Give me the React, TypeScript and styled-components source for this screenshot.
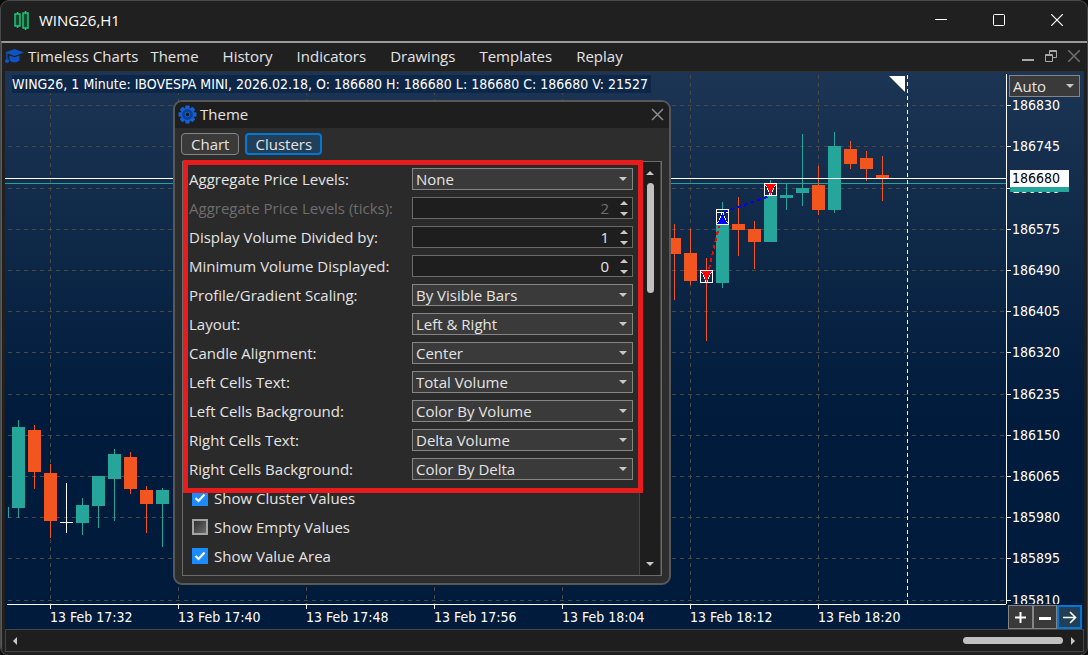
import React from "react";
import styled, { createGlobalStyle, css } from "styled-components";

const ui = `"Open Sans", "Noto Sans", sans-serif`;
const chartFont = `"DejaVu Sans Condensed", "DejaVu Sans", sans-serif`;

const GlobalStyle = createGlobalStyle`
  *, *::before, *::after { box-sizing: border-box; }
  body { margin: 0; background: #0c0c0c; font: 15px/20px ${ui}; color: #e4e4e4; }
  button, select, input { font: inherit; color: inherit; margin: 0; }
`;

const Window = styled.div`
  min-height: 100vh;
  display: flex;
  flex-direction: column;
  background: #202020;
  border: 1px solid #4a4a4a;
  border-radius: 9px;
  overflow: hidden;
`;

const TitleBar = styled.header`
  height: 40px;
  display: flex;
  align-items: center;
  padding: 0 24px 2px 13px;
  gap: 10px;
`;

const WindowTitle = styled.h1`
  flex: 1;
  margin: 0;
  font-size: 15px;
  font-weight: 400;
  color: #ffffff;
`;

const Controls = styled.div<{ $gap: number }>`
  display: flex;
  align-items: center;
  gap: ${(p) => p.$gap}px;
`;

const IconButton = styled.button<{ $color?: string }>`
  display: flex;
  padding: 0;
  border: 0;
  background: none;
  color: ${(p) => p.$color ?? "#ffffff"};
`;

const Frame = styled.div`
  flex: 1;
  display: flex;
  flex-direction: column;
  border-top: 2px solid #9a9a9a;
  border-left: 1px solid #5a5a5a;
  padding: 0 3px 3px;
`;

const MenuBar = styled.nav`
  height: 28px;
  display: flex;
  align-items: center;
  padding: 0 4px 2px 0;
`;

const MenuList = styled.ul`
  flex: 1;
  display: flex;
  gap: 24px;
  margin: 0 0 0 4px;
  padding: 0;
  list-style: none;
`;

const MenuItem = styled.button`
  padding: 0;
  border: 0;
  background: none;
`;

const Brand = styled.li`
  margin-right: -12px;
`;

const Workspace = styled.main`
  position: relative;
  flex: 1;
  display: grid;
  grid-template-columns: minmax(0, 1fr) 78px;
  grid-template-rows: minmax(0, 1fr) 25px;
  min-height: 558px;
  background: linear-gradient(#1c3554 0%, #011b3c 62%, #011b3c 100%);
  border-top: 1px solid #303030;
`;

const Plot = styled.div`
  position: relative;
  min-width: 0;
`;

const Drawing = styled.svg`
  display: block;
  width: 100%;
  height: 100%;
  min-height: 100%;
  font-family: ${chartFont};
  font-size: 14px;
  fill: #ffffff;
`;

const Layer = styled.div`
  position: absolute;
  inset: 0;
  overflow: hidden;
`;

const Quote = styled.p`
  position: absolute;
  left: 7px;
  top: 3px;
  margin: 0;
  padding-right: 3px;
  white-space: nowrap;
  background: #0d2749;
  color: #ffffff;
  font: 14px/18px ${chartFont};
`;

const PriceAxis = styled.div`
  position: relative;
`;

const ScaleSelect = styled.div`
  position: absolute;
  left: 3px;
  top: 3px;
  width: 71px;
`;

const AxisButtons = styled.div`
  display: grid;
  grid-template-columns: repeat(3, 1fr);
  padding: 1px 2px 0 2px;
`;

const AxisButton = styled.button<{ $active?: boolean }>`
  display: flex;
  align-items: center;
  justify-content: center;
  padding: 0;
  color: #ffffff;
  border: 1px solid #858585;
  background: #3a3a3a;
  ${(p) => p.$active && css`border: 2px solid #0078d7; background: #233f58;`}
`;

const HScroll = styled.div`
  height: 23px;
  display: flex;
  align-items: center;
  border: 1px solid #454545;
  background: #1e1e1e;
  padding: 0 8px 0 7px;
  gap: 8px;
`;

const HTrack = styled.div`
  flex: 1;
  display: flex;
  justify-content: flex-end;
`;

const HThumb = styled.div`
  width: 100px;
  height: 7px;
  border-radius: 4px;
  background: #c0c0c0;
`;

const Dialog = styled.section`
  position: absolute;
  left: 168px;
  top: 28px;
  width: 498px;
  display: flex;
  flex-direction: column;
  padding: 0 2px 7px;
  background: #2d2d2d;
  border: 2px solid #585858;
  border-radius: 9px;
`;

const DialogHeader = styled.header`
  height: 26px;
  margin: 0 -2px;
  padding: 0 5px 2px 3px;
  display: flex;
  align-items: center;
  gap: 3px;
  background: #1e1e1e;
  border-radius: 7px 7px 0 0;
`;

const DialogTitle = styled.h2`
  flex: 1;
  margin: 0;
  font-size: 15px;
  font-weight: 400;
`;

const Tabs = styled.div`
  display: flex;
  gap: 6px;
  padding: 5px 4px 6px;
`;

const Tab = styled.button<{ $active?: boolean }>`
  height: 22px;
  padding: 0 9px;
  line-height: 20px;
  border: 1px solid #858585;
  border-radius: 4px;
  background: #3a3a3a;
  ${(p) => p.$active && css`padding: 0 8px; line-height: 18px; border: 2px solid #0078d7; background: #233f58;`}
`;

const Panel = styled.div`
  position: relative;
  height: 415px;
  margin: 0 5px;
  display: flex;
  background: #2a2a2a;
  border: 1px solid #6a6a6a;
`;

const Fields = styled.div`
  flex: 1;
  display: flex;
  flex-direction: column;
  gap: 7px;
  padding: 6px 6px 0;
`;

const Field = styled.div<{ $disabled?: boolean }>`
  height: 22px;
  display: grid;
  grid-template-columns: 1fr 221px;
  align-items: center;
  color: ${(p) => (p.$disabled ? "#6e6e6e" : "inherit")};
`;

const Combo = styled.div`
  position: relative;
  height: 22px;
`;

const Select = styled.select`
  appearance: none;
  width: 100%;
  height: 22px;
  padding: 0 20px 0 3px;
  line-height: 20px;
  border: 1px solid #858585;
  border-radius: 0;
  background: #3a3a3a;
`;

const NumberBox = styled.input`
  display: block;
  width: 100%;
  height: 22px;
  padding: 0 23px 0 3px;
  text-align: right;
  border: 1px solid #6a6a6a;
  border-radius: 0;
  background: #1e1e1e;
`;

const Glyph = styled.svg<{ $right: number; $top: number }>`
  position: absolute;
  right: ${(p) => p.$right}px;
  top: ${(p) => p.$top}px;
  fill: #c8c8c8;
  pointer-events: none;
`;

const Check = styled.label`
  height: 22px;
  display: flex;
  align-items: center;
  gap: 6px;
  padding-left: 3px;
`;

const CheckInput = styled.input`
  appearance: none;
  width: 16px;
  height: 16px;
  border: 2px solid #a4a4a4;
  background: linear-gradient(135deg, #303030, #6c6c6c);
  &:checked {
    border-color: #1a8cff;
    background: #1a8cff url("data:image/svg+xml,%3Csvg xmlns='http://www.w3.org/2000/svg' viewBox='0 0 12 12'%3E%3Cpath d='M1.500 6l3 3 6-6.500' fill='none' stroke='white' stroke-width='2.200'/%3E%3C/svg%3E");
  }
`;

const VScroll = styled.div`
  width: 22px;
  display: flex;
  flex-direction: column;
  align-items: center;
  justify-content: space-between;
  padding: 9px 0 9px;
  background: #1e1e1e;
  border-left: 1px solid #454545;
  border-right: 1px solid #454545;
`;

const VThumbTrack = styled.div`
  flex: 1;
  padding-top: 8px;
`;

const VThumb = styled.div`
  width: 7px;
  height: 110px;
  border-radius: 4px;
  background: #c0c0c0;
`;

const Highlight = styled.div`
  position: absolute;
  left: 0;
  right: 18px;
  top: -2px;
  height: 333px;
  border: 5px solid #e81c1c;
  pointer-events: none;
`;

const teal = "#26a69a";
const orange = "#f2551e";

type Candle = [x: number, high: number, low: number, top: number, bottom: number, color: string];

const candles: Candle[] = [
  [3, 507, 518, 507, 507, teal],
  [13, 420, 518, 427, 508, teal],
  [29, 425, 489, 430, 472, orange],
  [45, 464, 538, 473, 521, orange],
  [61, 483, 533, 522, 523, "#ffffff"],
  [77, 498, 535, 505, 523, teal],
  [93, 476, 528, 476, 506, teal],
  [109, 449, 521, 454, 479, teal],
  [125, 452, 494, 457, 489, orange],
  [141, 486, 533, 490, 504, orange],
  [157, 488, 547, 490, 504, teal],
  [669, 224, 300, 238, 254, orange],
  [685, 229, 285, 253, 281, orange],
  [701, 258, 341, 280, 282, orange],
  [717, 202, 288, 209, 283, teal],
  [733, 197, 256, 224, 230, orange],
  [749, 221, 269, 229, 242, orange],
  [765, 180, 242, 184, 242, teal],
  [781, 184, 210, 195, 198, teal],
  [797, 134, 206, 188, 193, teal],
  [813, 166, 215, 185, 210, orange],
  [829, 132, 213, 146, 210, teal],
  [845, 141, 169, 149, 164, orange],
  [861, 151, 181, 158, 169, orange],
  [877, 156, 201, 175, 178, orange],
];

const prices: [number, number][] = [
  [186830, 105], [186745, 146], [186660, 188], [186575, 229], [186490, 270], [186405, 311], [186320, 352],
  [186235, 394], [186150, 435], [186065, 476], [185980, 517], [185895, 558], [185810, 600],
];

const times: [string, number][] = [
  ["13 Feb 17:32", 45], ["13 Feb 17:40", 173], ["13 Feb 17:48", 301], ["13 Feb 17:56", 429],
  ["13 Feb 18:04", 557], ["13 Feb 18:12", 685], ["13 Feb 18:20", 813],
];

/* Vertical distance from the top of the window to the top of the drawing area. */
const TOP = 72;

/* Boxed trade arrow; the box hides the candle behind it. */
function Marker({ x, y, up }: { x: number; y: number; up?: boolean }) {
  return (
    <g transform={`translate(${x} ${y})`} shapeRendering="crispEdges">
      <rect x="0.5" y="0.5" width="12" height="12" fill="#0f2a4b" stroke="#fff" />
      {up ? (
        <>
          <path d="M1 12L6.5 1L12 12Z" fill="#00f" />
          <path d="M1.5 11L6 1.5M11.500 11L7 1.5" stroke="#fff" strokeDasharray="2 1" />
        </>
      ) : (
        <>
          <path d="M1 1H12L6.500 12.500Z" fill="#f00" />
          <path d="M1.500 2L6 11.500M11.500 2L7 11.500" stroke="#fff" strokeDasharray="2 1" />
        </>
      )}
    </g>
  );
}

function Chart() {
  return (
    <Layer>
      <Drawing role="img" aria-label="Candlestick chart">
        <g stroke="#4b4742" strokeDasharray="4 4" shapeRendering="crispEdges">
          {times.map(([t, x]) => <line key={t} x1={x + 0.5} x2={x + 0.5} y1="3" y2="100%" />)}
          {prices.map(([p, y]) => <line key={p} x1="3" x2="100%" y1={y - TOP + 0.5} y2={y - TOP + 0.5} />)}
        </g>
        <g transform={`translate(0 ${-TOP})`} shapeRendering="crispEdges">
          {candles.map(([x, high, low, top, bottom, color]) => (
            <g key={x} fill={color}>
              <rect x={x} y={high} width="1" height={low - high} />
              <rect x={x - 6} y={top} width="13" height={bottom - top} />
            </g>
          ))}
        </g>
        <g shapeRendering="crispEdges">
          <rect y="106" width="100%" height="1" fill="#fff" />
          <rect y="111" width="100%" height="1" fill={teal} />
        </g>
        <g transform={`translate(0 ${-TOP})`}>
          <Marker x={695} y={270} />
          <rect x="711.5" y="209.5" width="12" height="3" fill="#0f2a4b" stroke="#fff" shapeRendering="crispEdges" />
          <Marker x={711} y={212} up />
          <Marker x={759} y={183} />
          <path d="M884 76H900V92Z" />
        </g>
        <g transform={`translate(0 ${-TOP})`} strokeWidth="2" strokeDasharray="4 3" shapeRendering="crispEdges">
          <path d="M704 269L714 226" stroke="#f00" />
          <path d="M719 212L765 196" stroke="#00f" />
        </g>
        <path d="M902.5 3V700" stroke="#fff" strokeDasharray="4 3" shapeRendering="crispEdges" />
      </Drawing>
    </Layer>
  );
}

function PriceScale() {
  return (
    <Drawing shapeRendering="crispEdges">
      <rect x="0" y="2" width="1" height="100%" />
      {prices.map(([p, y]) => (
        <g key={p}>
          <rect x="0" y={y - TOP} width="5" height="1" />
          <text x="6" y={y - TOP + 5}>{p}</text>
        </g>
      ))}
      <rect x="4" y="103" width="59" height="17" fill={teal} />
      <rect x="4" y="98" width="59" height="17" />
      <text x="6" y="111" fill="#000">186680</text>
    </Drawing>
  );
}

function TimeScale() {
  return (
    <Drawing shapeRendering="crispEdges">
      <rect x="2" y="0" width="100%" height="1" />
      {times.map(([t, x]) => (
        <g key={t}>
          <rect x={x} y="0" width="1" height="5" />
          <text x={x} y="18">{t}</text>
        </g>
      ))}
    </Drawing>
  );
}

function Chevron({ right, top }: { right: number; top: number }) {
  return <Glyph $right={right} $top={top} width="8" height="4" aria-hidden><path d="M0 0H8L4 4Z" /></Glyph>;
}

function ComboField({ label, value }: { label: string; value: string }) {
  const id = label.replace(/\W+/g, "-");
  return (
    <Field>
      <label htmlFor={id}>{label}</label>
      <Combo>
        <Select id={id} defaultValue={value}><option>{value}</option></Select>
        <Chevron right={6} top={9} />
      </Combo>
    </Field>
  );
}

function SpinField({ label, value, disabled }: { label: string; value: string; disabled?: boolean }) {
  const id = label.replace(/\W+/g, "-");
  return (
    <Field $disabled={disabled}>
      <label htmlFor={id}>{label}</label>
      <Combo>
        <NumberBox id={id} type="text" inputMode="numeric" defaultValue={value} disabled={disabled} />
        <Glyph $right={5} $top={4} width="8" height="15" aria-hidden><path d="M0 4H8L4 0Z M0 11H8L4 15Z" /></Glyph>
      </Combo>
    </Field>
  );
}

function CheckField({ label, checked }: { label: string; checked?: boolean }) {
  return <Check><CheckInput type="checkbox" defaultChecked={checked} />{label}</Check>;
}

function GearIcon() {
  return (
    <svg width="19" height="19" viewBox="-9.5 -9.5 19 19" fill="#0c3f96" aria-hidden>
      {[0, 45, 90, 135].map((a) => (
        <rect key={a} x="-2.2" y="-9" width="4.4" height="18" rx="1" transform={`rotate(${a})`} fill="#1560d8" />
      ))}
      <circle r="6" stroke="#1560d8" strokeWidth="1.2" />
      <circle r="2.4" fill="#1e1e1e" stroke="#1560d8" />
    </svg>
  );
}

function ThemeDialog() {
  return (
    <Dialog role="dialog" aria-label="Theme">
      <DialogHeader>
        <GearIcon />
        <DialogTitle>Theme</DialogTitle>
        <IconButton $color="#8c8c8c" aria-label="Close dialog">
          <svg width="13" height="13" stroke="currentColor" strokeWidth="1.5"><path d="M1 1L12 12M12 1L1 12" /></svg>
        </IconButton>
      </DialogHeader>
      <Tabs role="tablist">
        <Tab role="tab">Chart</Tab>
        <Tab role="tab" $active aria-selected>Clusters</Tab>
      </Tabs>
      <Panel>
        <Fields>
          <ComboField label="Aggregate Price Levels:" value="None" />
          <SpinField label="Aggregate Price Levels (ticks):" value="2" disabled />
          <SpinField label="Display Volume Divided by:" value="1" />
          <SpinField label="Minimum Volume Displayed:" value="0" />
          <ComboField label="Profile/Gradient Scaling:" value="By Visible Bars" />
          <ComboField label="Layout:" value="Left & Right" />
          <ComboField label="Candle Alignment:" value="Center" />
          <ComboField label="Left Cells Text:" value="Total Volume" />
          <ComboField label="Left Cells Background:" value="Color By Volume" />
          <ComboField label="Right Cells Text:" value="Delta Volume" />
          <ComboField label="Right Cells Background:" value="Color By Delta" />
          <CheckField label="Show Cluster Values" checked />
          <CheckField label="Show Empty Values" />
          <CheckField label="Show Value Area" checked />
        </Fields>
        <VScroll>
          <svg width="8" height="4" fill="#c8c8c8" aria-hidden><path d="M0 4H8L4 0Z" /></svg>
          <VThumbTrack><VThumb /></VThumbTrack>
          <svg width="8" height="4" fill="#c8c8c8" aria-hidden><path d="M0 0H8L4 4Z" /></svg>
        </VScroll>
        <Highlight />
      </Panel>
    </Dialog>
  );
}

export default function App() {
  return (
    <>
      <GlobalStyle />
      <Window>
        <TitleBar>
          <svg width="15" height="19" viewBox="0 0 15 19" fill="#0d4a2b" stroke="#1fce7f" strokeWidth="1.4" aria-hidden>
            <path d="M3.5 1V17M11.5 0V19" />
            <rect x="1" y="3" width="5" height="12" />
            <rect x="9" y="2" width="5" height="15" />
          </svg>
          <WindowTitle>WING26,H1</WindowTitle>
          <Controls $gap={46}>
            <IconButton aria-label="Minimize"><svg width="12" height="12" fill="currentColor"><rect y="5" width="12" height="1" /></svg></IconButton>
            <IconButton aria-label="Maximize"><svg width="12" height="12" fill="none" stroke="currentColor"><rect x="0.5" y="0.5" width="11" height="11" rx="1" /></svg></IconButton>
            <IconButton aria-label="Close"><svg width="12" height="12" stroke="currentColor" strokeWidth="1.2"><path d="M0 0L12 12M12 0L0 12" /></svg></IconButton>
          </Controls>
        </TitleBar>
        <Frame>
          <MenuBar>
            <svg width="19" height="15" viewBox="0 0 19 15" fill="#1054c4" aria-hidden>
              <path d="M9.500 0L19 3.500L9.500 7L0 3.500Z M4.500 6.500L9.500 8.300L14.500 6.500V11.500Q9.500 15.500 4.500 11.500Z M1.300 4H2.500V10H1.300Z" />
              <circle cx="2" cy="12" r="2" />
            </svg>
            <MenuList>
              <Brand><MenuItem>Timeless Charts</MenuItem></Brand>
              {["Theme", "History", "Indicators", "Drawings", "Templates", "Replay"].map((m) => (
                <li key={m}><MenuItem>{m}</MenuItem></li>
              ))}
            </MenuList>
            <Controls $gap={11}>
              <IconButton $color="#a8a8a8" aria-label="Minimize chart"><svg width="12" height="12" fill="currentColor"><rect y="9" width="12" height="2" /></svg></IconButton>
              <IconButton $color="#a8a8a8" aria-label="Restore chart">
                <svg width="12" height="12" fill="none" stroke="currentColor"><path d="M4.500 4V0.500H11.500V7.500H8M4 1.500H12M0.500 4.500H7.500V11.500H0.500ZM0 5.500H8" /></svg>
              </IconButton>
              <IconButton $color="#707070" aria-label="Close chart"><svg width="12" height="12" stroke="currentColor" strokeWidth="1.5"><path d="M0 0L12 12M12 0L0 12" /></svg></IconButton>
            </Controls>
          </MenuBar>
          <Workspace>
            <Plot>
              <Chart />
              <Quote>WING26, 1 Minute: IBOVESPA MINI, 2026.02.18, O: 186680 H: 186680 L: 186680 C: 186680 V: 21527</Quote>
            </Plot>
            <PriceAxis>
              <Layer><PriceScale /></Layer>
              <ScaleSelect>
                <Select aria-label="Scale" defaultValue="Auto"><option>Auto</option></Select>
                <Chevron right={6} top={9} />
              </ScaleSelect>
            </PriceAxis>
            <TimeScale />
            <AxisButtons>
              <AxisButton aria-label="Zoom in"><svg width="11" height="11" stroke="currentColor" strokeWidth="2"><path d="M5.500 0V11M0 5.500H11" /></svg></AxisButton>
              <AxisButton aria-label="Zoom out"><svg width="12" height="11" fill="currentColor"><rect y="5" width="12" height="3" /></svg></AxisButton>
              <AxisButton $active aria-label="Scroll to end"><svg width="14" height="13" fill="none" stroke="currentColor" strokeWidth="1.6"><path d="M0 6.500H12M7 1L12.500 6.500L7 12" /></svg></AxisButton>
            </AxisButtons>
            <ThemeDialog />
          </Workspace>
          <HScroll>
            <svg width="4" height="8" fill="#c8c8c8" aria-hidden><path d="M4 0V8L0 4Z" /></svg>
            <HTrack><HThumb /></HTrack>
            <svg width="4" height="8" fill="#c8c8c8" aria-hidden><path d="M0 0V8L4 4Z" /></svg>
          </HScroll>
        </Frame>
      </Window>
    </>
  );
}
